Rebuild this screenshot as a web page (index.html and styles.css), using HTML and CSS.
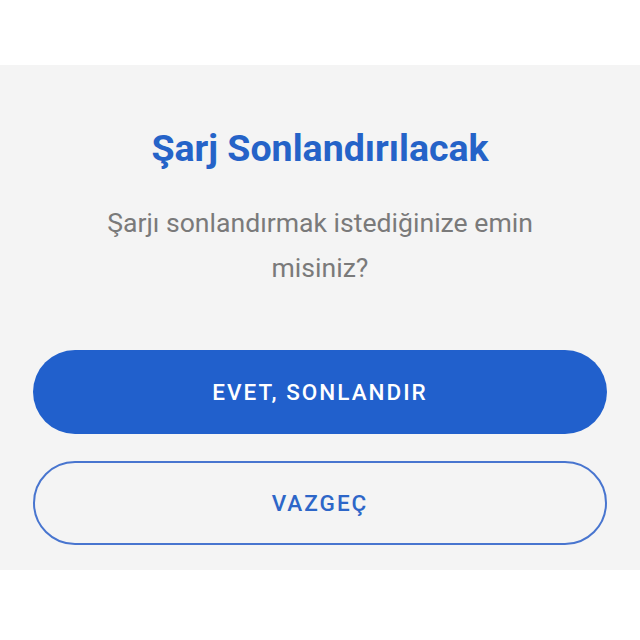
FILE: index.html
```html
<!DOCTYPE html>
<html>
<head>
<meta charset="utf-8">
<link rel="stylesheet" href="styles.css">
</head>
<body>
<div class="panel">
  <h1 class="title">Şarj Sonlandırılacak</h1>
  <p class="message">Şarjı sonlandırmak istediğinize emin misiniz?</p>
  <div class="actions">
    <button class="btn btn-primary">EVET, SONLANDIR</button>
    <button class="btn btn-outline">VAZGEÇ</button>
  </div>
</div>
</body>
</html>
```
FILE: styles.css
```css
html, body {
  margin: 0;
  padding: 0;
  background: #ffffff;
  font-family: Roboto, "Liberation Sans", sans-serif;
}
.panel {
  margin-top: 65px;
  height: 505px;
  box-sizing: border-box;
  background: #f4f4f4;
  padding: 61px 33px 25px 33px;
  display: flex;
  flex-direction: column;
  align-items: center;
}
.title {
  margin: 0;
  font-size: 37.5px;
  line-height: 44px;
  font-weight: 700;
  color: #2563c8;
  text-align: center;
}
.message {
  margin: 30px 0 0 0;
  width: 470px;
  font-size: 26.6px;
  line-height: 45px;
  color: #7a7a7a;
  text-align: center;
}
.actions {
  margin-top: 60px;
  width: 100%;
  display: flex;
  flex-direction: column;
  gap: 27px;
}
.btn {
  height: 84px;
  border-radius: 42px;
  font-family: Roboto, "Liberation Sans", sans-serif;
  font-size: 22.5px;
  font-weight: 500;
  letter-spacing: 2px;
  box-sizing: border-box;
}
.btn-primary {
  background: #2160cc;
  color: #ffffff;
  border: none;
}
.btn-outline {
  background: transparent;
  color: #2d66c8;
  border: 2px solid #4875cf;
}
```
